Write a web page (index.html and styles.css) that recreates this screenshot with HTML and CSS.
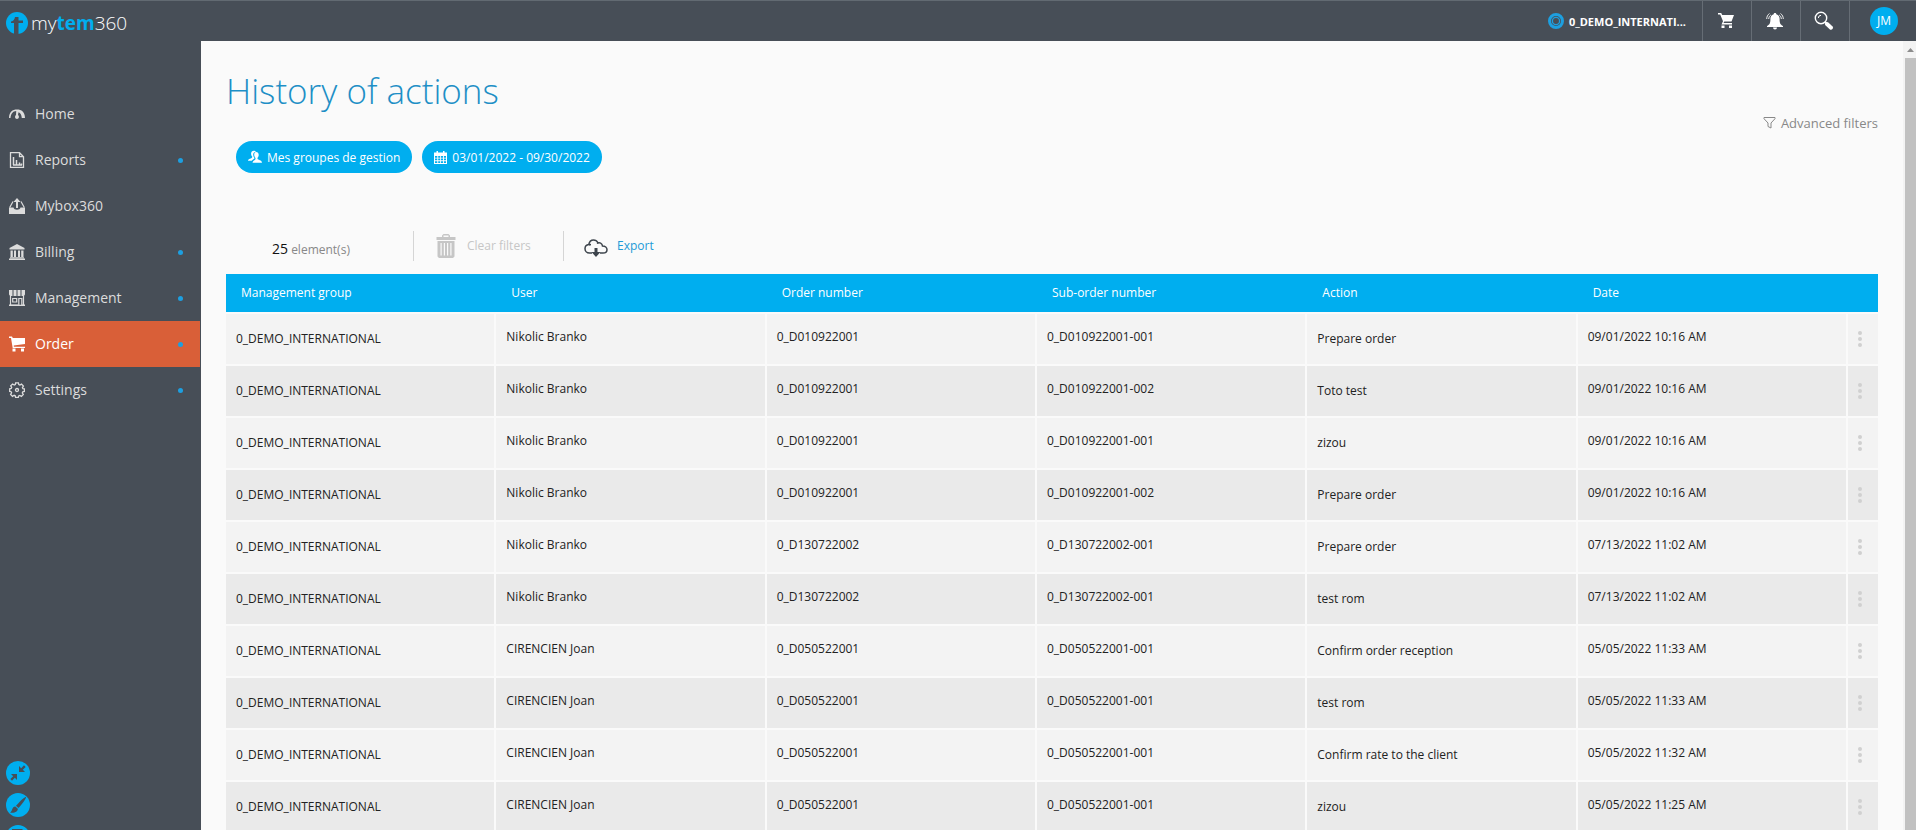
FILE: index.html
```html
<!DOCTYPE html>
<html lang="en">
<head>
    <meta charset="UTF-8">
    <meta name="viewport" content="width=device-width, initial-scale=1.0">
    <title>mytem360 - History of actions</title>
    <link rel="stylesheet" href="styles.css">
</head>
<body>
    <svg class="sprite" aria-hidden="true">
        <symbol id="dots" viewBox="0 0 6 18">
            <circle cx="3" cy="3" r="2"/><circle cx="3" cy="9" r="2"/><circle cx="3" cy="15" r="2"/>
        </symbol>
    </svg>

    <header class="topbar">
        <a href="#" class="logo">
            <svg width="22" height="22" viewBox="0 0 22 22">
                <circle cx="11" cy="11" r="11" fill="#00aeef"/>
                <path d="M8 22V11H5V9.500C7.500 9 8.500 7.500 9 5h3.500v3.500H17V11h-4.500v11z" fill="#474e57"/>
            </svg>
            <span>my<b>tem</b>360</span>
        </a>
        <div class="top-actions">
            <button class="group">
                <svg width="16" height="16" viewBox="0 0 16 16" fill="none">
                    <circle cx="8" cy="8" r="6.500" stroke="#1d9fe0" stroke-width="3"/>
                    <circle cx="8" cy="8" r="3.600" stroke="#1d9fe0" stroke-width="1.300"/>
                </svg>
                <span>0_DEMO_INTERNATI...</span>
            </button>
            <button class="top-btn" aria-label="Cart">
                <svg width="16" height="16" viewBox="0 0 16 16" fill="#fff">
                    <path d="M0 0h3.200l1 2H16l-2.500 6.500H6.300L5.500 10H14v1.500H3.500L5 8.300 2.200 1.500H0z"/>
                    <path d="M3.500 12.500h3V15h-3zM11 12.500h3V15h-3z"/>
                </svg>
            </button>
            <button class="top-btn" aria-label="Notifications">
                <svg width="18" height="18" viewBox="0 0 18 18" fill="#fff">
                    <path d="M9 1c.8 0 1.300.5 1.300 1.200C12.700 2.800 13.600 4.700 13.600 7c0 4 .5 5.500 3.400 7v1H1v-1c2.900-1.500 3.400-3 3.400-7 0-2.300.9-4.200 3.300-4.800C7.700 1.500 8.200 1 9 1zM7 15.500h4a2 2 0 0 1-4 0z"/>
                    <path d="M3.500 1.500C1.500 3 .8 4.700.7 7M14.500 1.500c2 1.500 2.700 3.200 2.800 5.500M4.800 3C3.500 4 2.800 5.200 2.700 7M13.200 3c1.300 1 2 2.200 2.100 4" fill="none" stroke="#fff" stroke-width=".9"/>
                </svg>
            </button>
            <button class="top-btn" aria-label="Search">
                <svg width="20" height="20" viewBox="0 0 20 20" fill="none" stroke="#fff">
                    <circle cx="7" cy="7" r="5.700" stroke-width="1.400"/>
                    <path d="M4.300 7A2.800 2.800 0 0 1 7 4.300" stroke-width="1"/>
                    <path d="M10.800 10.800l2 2" stroke-width="2"/>
                    <path d="M13 13l4 3.700" stroke-width="4" stroke-linecap="round"/>
                </svg>
            </button>
            <button class="top-btn top-user" aria-label="Account"><span class="avatar">JM</span></button>
        </div>
    </header>

    <div class="layout">
        <aside class="sidebar">
            <nav class="menu">
                <a href="#">
                    <svg width="16" height="16" viewBox="0 0 16 16" fill="currentColor">
                        <path d="M0 12C0 6 3.500 3.500 8 3.500S16 6 16 12h-3.200c-.2-3-1.300-5-3.300-5.700L9 9c1.500 1 1.200 4-1 4s-2.500-3-1-4l.2-4C4 5.200 2 7.500 1.500 12z"/>
                    </svg>
                    <span>Home</span>
                </a>
                <a href="#" class="has-sub">
                    <svg width="16" height="16" viewBox="0 0 16 16" fill="none" stroke="currentColor">
                        <path d="M1.500.7h9l4 4v10.600h-13zM10.500.7v4h4" stroke-width="1.300"/>
                        <path d="M4.500 13V5M7.500 13V8M10.500 13v-2.500M12.500 13v-1.500M4 13h9" stroke-width="1.500"/>
                    </svg>
                    <span>Reports</span>
                </a>
                <a href="#">
                    <svg width="16" height="16" viewBox="0 0 16 16" fill="currentColor">
                        <path d="M0 9.500h4.500c.5 3 6.500 3 7 0H16V16H0z"/>
                        <path d="M8 0l3.500 4H9v6H7V4H4.500z"/>
                        <path d="M.7 9.500l3.300-6M15.300 9.500l-3.300-6" fill="none" stroke="currentColor" stroke-width="1.200"/>
                    </svg>
                    <span>Mybox360</span>
                </a>
                <a href="#" class="has-sub">
                    <svg width="16" height="16" viewBox="0 0 16 16" fill="currentColor">
                        <path d="M8 0l7.500 4v1.500H.5V4zM1.500 6.500h2.300V13H1.500zM5 6.500h2V13H5zM9 6.500h2V13H9zM12.200 6.500h2.300V13h-2.300zM1 13.200h14v1H1zM0 14.500h16V16H0z"/>
                    </svg>
                    <span>Billing</span>
                </a>
                <a href="#" class="has-sub">
                    <svg width="16" height="16" viewBox="0 0 16 16" fill="currentColor">
                        <path d="M0 0h3.500v6H1.200L0 4.500zM4.500 0h3v6h-3zM8.500 0h3v6h-3zM12.500 0H16v4.500L14.800 6h-2.300z"/>
                        <path d="M1.500 5v10.300h13V5M3.700 8.500h4v3.500h-4zM9.800 15.500V8.500h3v7" fill="none" stroke="currentColor" stroke-width="1.200"/>
                        <path d="M0 14.500h9V16H0zM13 14.500h3V16h-3z"/>
                    </svg>
                    <span>Management</span>
                </a>
                <a href="#" class="has-sub active">
                    <svg width="16" height="16" viewBox="0 0 16 16" fill="currentColor">
                        <path d="M0 .5h3L3.800 2H16v6L4.700 9.500l.2 1.300H16V12H3.700L2 2H0z"/>
                        <path d="M3.500 12.500h3V15.500h-3zM12 12.500h3V15.500h-3z"/>
                    </svg>
                    <span>Order</span>
                </a>
                <a href="#" class="has-sub">
                    <svg width="16" height="16" viewBox="0 0 16 16" fill="none" stroke="currentColor" stroke-width="1.300">
                        <path d="M6.600.8h2.800l.4 1.800 1.100.5 1.600-1 1.900 1.900-1 1.600.5 1.100 1.500.2v2.500l-1.600.4-.5 1.200 1 1.500-1.900 1.900-1.600-1-1.100.5-.4 1.500H6.600l-.4-1.600-1.100-.5-1.600 1-1.900-1.900 1-1.600-.5-1.100-1.400-.3V6.800l1.500-.3.500-1.100-1-1.500 1.900-1.900 1.600 1 1.100-.5z"/>
                        <circle cx="8" cy="8" r="1.500"/>
                    </svg>
                    <span>Settings</span>
                </a>
            </nav>
            <div class="tools">
                <button aria-label="Collapse menu">
                    <svg width="16" height="16" viewBox="0 0 16 16" fill="#474e57">
                        <path d="M9 1v6h6l-2.200-2.200L15.700 2 14 .3l-2.800 2.900zM7 15V9H1l2.200 2.200L.3 14 2 15.700l2.800-2.900z"/>
                    </svg>
                </button>
                <button aria-label="Theme">
                    <svg width="16" height="16" viewBox="0 0 16 16" fill="#474e57">
                        <path d="M16 0c.6 1.500-5 8.500-7.500 11L6 8.800C8.500 6 14.500-.5 16 0zM5.300 9.500l2.500 2.300c.2 2.600-3.300 4.700-7.800 3.700 2.600-1.200 1.700-5.800 5.300-6z"/>
                    </svg>
                </button>
                <button aria-label="Help">
                    <svg width="16" height="16" viewBox="0 0 16 16" fill="#474e57"><path d="M2 0h10l3 3v13H2z"/></svg>
                </button>
            </div>
        </aside>

        <main class="content">
            <h1>History of actions</h1>
            <div class="filters">
                <button class="pill">
                    <svg width="14" height="14" viewBox="0 0 14 14" fill="#fff">
                        <path d="M8 2c1.800 0 2.700 1.200 2.700 2.800 0 1.200-.5 2.400-1.200 3v1C9.900 10 13.800 10 14 12.800H4.500c.2-2.300 2.700-2.500 3-3.900v-1C6.800 7.200 6.200 6 6.200 4.800 6.200 3.200 6.800 2 8 2z"/>
                        <path d="M5.800.7c1 0 1.800.4 2.200 1C6 1.800 5 3.200 5.200 5c.1 1.300.6 2.300 1.300 3-.1 1.200-2 1.300-2.800 2.800H0C.2 8.500 3.600 8.900 4.200 7.300V6.500C3.500 5.800 3.100 4.700 3.100 3.500 3.100 1.800 4.100.7 5.800.7z"/>
                    </svg>
                    <span>Mes groupes de gestion</span>
                </button>
                <button class="pill">
                    <svg width="13" height="13" viewBox="0 0 13 13" fill="#fff">
                        <path fill-rule="evenodd" d="M0 1.500h13V13H0zM1 5v1.700h2.300V5zM4.200 5v1.700h2V5zM7 5v1.700h2V5zM9.900 5v1.700H12V5zM1 7.600v1.700h2.300V7.600zM4.200 7.600v1.700h2V7.600zM7 7.600v1.700h2V7.600zM9.900 7.600v1.700H12V7.600zM1 10.200V12h2.300v-1.800zM4.200 10.200V12h2v-1.800zM7 10.200V12h2v-1.800zM9.900 10.200V12H12v-1.800z"/>
                        <path d="M2.500 0H4v3H2.500zM9 0h1.500v3H9z"/>
                    </svg>
                    <span>03/01/2022 - 09/30/2022</span>
                </button>
                <button class="advanced">
                    <svg width="13" height="12" viewBox="0 0 13 12" fill="none" stroke="#888"><path d="M1 .5h11v1.200L8 6v5L5 9.500V6L1 1.700z"/></svg>
                    <span>Advanced filters</span>
                </button>
            </div>

            <div class="toolbar">
                <p class="count"><span>25</span> element(s)</p>
                <button class="tool clear" disabled>
                    <svg width="20" height="24" viewBox="0 0 20 24" fill="#c6c6c6">
                        <path d="M6 3V1.500L7.500 0h5L14 1.500V3h5.500v3H.5V3zM7.500 3h5V1.500h-5z" fill-rule="evenodd"/>
                        <path fill-rule="evenodd" d="M1.500 7h17v15.500L17 24H3l-1.500-1.500zM4.500 9v12.500h1.200V9zM7.800 9v12.500H9V9zM11 9v12.500h1.200V9zM14.300 9v12.500h1.200V9z"/>
                    </svg>
                    <span>Clear filters</span>
                </button>
                <button class="tool export">
                    <svg width="24" height="18" viewBox="0 0 24 18" fill="none" stroke="#3d444c" stroke-width="1.500">
                        <path d="M8 14H5.500C2.800 14 1 12 1 9.700 1 7.500 2.600 5.800 4.800 5.500 5.300 2.700 7.500 1 9.500 1c2 0 3.500 1 4.300 2.500M13 4.500c2.500-1.700 5.300-.2 5.500 2.500 2.700 0 4.500 1.700 4.500 3.700S21.200 14 19 14h-3M7 5.500c-.8 0-1.500.2-2 .7"/>
                        <path d="M10.500 9h3v4h3L12 18l-4.500-5h3z" fill="#3d444c" stroke="none"/>
                    </svg>
                    <span>Export</span>
                </button>
            </div>

            <table class="history">
                <thead>
                    <tr>
                        <th>Management group</th>
                        <th>User</th>
                        <th>Order number</th>
                        <th>Sub-order number</th>
                        <th>Action</th>
                        <th>Date</th>
                        <th class="more"></th>
                    </tr>
                </thead>
                <tbody>
                    <tr>
                        <td class="low">0_DEMO_INTERNATIONAL</td>
                        <td>Nikolic Branko</td>
                        <td>0_D010922001</td>
                        <td>0_D010922001-001</td>
                        <td class="low">Prepare order</td>
                        <td>09/01/2022 10:16 AM</td>
                        <td class="more"><button aria-label="More"><svg><use href="#dots"/></svg></button></td>
                    </tr>
                    <tr>
                        <td class="low">0_DEMO_INTERNATIONAL</td>
                        <td>Nikolic Branko</td>
                        <td>0_D010922001</td>
                        <td>0_D010922001-002</td>
                        <td class="low">Toto test</td>
                        <td>09/01/2022 10:16 AM</td>
                        <td class="more"><button aria-label="More"><svg><use href="#dots"/></svg></button></td>
                    </tr>
                    <tr>
                        <td class="low">0_DEMO_INTERNATIONAL</td>
                        <td>Nikolic Branko</td>
                        <td>0_D010922001</td>
                        <td>0_D010922001-001</td>
                        <td class="low">zizou</td>
                        <td>09/01/2022 10:16 AM</td>
                        <td class="more"><button aria-label="More"><svg><use href="#dots"/></svg></button></td>
                    </tr>
                    <tr>
                        <td class="low">0_DEMO_INTERNATIONAL</td>
                        <td>Nikolic Branko</td>
                        <td>0_D010922001</td>
                        <td>0_D010922001-002</td>
                        <td class="low">Prepare order</td>
                        <td>09/01/2022 10:16 AM</td>
                        <td class="more"><button aria-label="More"><svg><use href="#dots"/></svg></button></td>
                    </tr>
                    <tr>
                        <td class="low">0_DEMO_INTERNATIONAL</td>
                        <td>Nikolic Branko</td>
                        <td>0_D130722002</td>
                        <td>0_D130722002-001</td>
                        <td class="low">Prepare order</td>
                        <td>07/13/2022 11:02 AM</td>
                        <td class="more"><button aria-label="More"><svg><use href="#dots"/></svg></button></td>
                    </tr>
                    <tr>
                        <td class="low">0_DEMO_INTERNATIONAL</td>
                        <td>Nikolic Branko</td>
                        <td>0_D130722002</td>
                        <td>0_D130722002-001</td>
                        <td class="low">test rom</td>
                        <td>07/13/2022 11:02 AM</td>
                        <td class="more"><button aria-label="More"><svg><use href="#dots"/></svg></button></td>
                    </tr>
                    <tr>
                        <td class="low">0_DEMO_INTERNATIONAL</td>
                        <td>CIRENCIEN Joan</td>
                        <td>0_D050522001</td>
                        <td>0_D050522001-001</td>
                        <td class="low">Confirm order reception</td>
                        <td>05/05/2022 11:33 AM</td>
                        <td class="more"><button aria-label="More"><svg><use href="#dots"/></svg></button></td>
                    </tr>
                    <tr>
                        <td class="low">0_DEMO_INTERNATIONAL</td>
                        <td>CIRENCIEN Joan</td>
                        <td>0_D050522001</td>
                        <td>0_D050522001-001</td>
                        <td class="low">test rom</td>
                        <td>05/05/2022 11:33 AM</td>
                        <td class="more"><button aria-label="More"><svg><use href="#dots"/></svg></button></td>
                    </tr>
                    <tr>
                        <td class="low">0_DEMO_INTERNATIONAL</td>
                        <td>CIRENCIEN Joan</td>
                        <td>0_D050522001</td>
                        <td>0_D050522001-001</td>
                        <td class="low">Confirm rate to the client</td>
                        <td>05/05/2022 11:32 AM</td>
                        <td class="more"><button aria-label="More"><svg><use href="#dots"/></svg></button></td>
                    </tr>
                    <tr>
                        <td class="low">0_DEMO_INTERNATIONAL</td>
                        <td>CIRENCIEN Joan</td>
                        <td>0_D050522001</td>
                        <td>0_D050522001-001</td>
                        <td class="low">zizou</td>
                        <td>05/05/2022 11:25 AM</td>
                        <td class="more"><button aria-label="More"><svg><use href="#dots"/></svg></button></td>
                    </tr>
                </tbody>
            </table>
        </main>

        <div class="scrollbar">
            <svg width="13" height="17" viewBox="0 0 13 17"><path d="M4 11h7L7.500 7z" fill="#8c8c8c"/></svg>
            <div class="thumb"></div>
        </div>
    </div>
</body>
</html>
```
FILE: styles.css
```css
* {
    box-sizing: border-box;
}

body {
    margin: 0;
    height: 100vh;
    display: flex;
    flex-direction: column;
    overflow: hidden;
    font-family: 'Open Sans', 'Noto Sans', sans-serif;
    font-size: 12px;
    color: #222;
    background-color: #474e57;
}

button {
    border: none;
    padding: 0;
    background: none;
    font: inherit;
    color: inherit;
    cursor: pointer;
}

a {
    text-decoration: none;
    color: inherit;
}

svg {
    display: block;
    flex-shrink: 0;
}

.sprite {
    width: 0;
    height: 0;
    position: absolute;
}

/* top bar */
.topbar {
    display: flex;
    justify-content: space-between;
    flex-shrink: 0;
    height: 41px;
    border-top: 1px solid #626a72;
}

.logo {
    display: flex;
    align-items: center;
    gap: 3px;
    padding: 4px 0 0 6px;
    font-size: 19px;
    font-weight: 300;
    color: #fff;
}

.logo b {
    font-weight: 700;
    color: #00aeef;
}

.top-actions {
    display: flex;
}

.group {
    display: flex;
    align-items: center;
    gap: 5px;
    padding-right: 16px;
    font-size: 11px;
    font-weight: 700;
    color: #fff;
}

.top-btn {
    display: flex;
    align-items: center;
    justify-content: center;
    width: 49px;
    padding-right: 2px;
    border-left: 1px solid #666d75;
}

.top-user {
    width: 67px;
    padding: 0 0 0 2px;
}

.avatar {
    width: 28px;
    height: 28px;
    border-radius: 50%;
    background-color: #00aeef;
    color: #fff;
    line-height: 28px;
}

/* sidebar */
.layout {
    display: flex;
    flex: 1;
    min-height: 0;
}

.sidebar {
    display: flex;
    flex-direction: column;
    justify-content: space-between;
    flex-shrink: 0;
    width: 201px;
    padding-top: 50px;
}

.menu {
    margin-right: 1px;
}

.menu a {
    display: flex;
    align-items: center;
    gap: 10px;
    height: 46px;
    padding: 0 17px 0 9px;
    font-size: 14px;
    color: #dcdcdc;
}

.menu span {
    padding-bottom: 2px;
}

.menu .active {
    background-color: #d95f38;
    color: #fff;
}

.has-sub::after {
    content: "";
    width: 5px;
    height: 5px;
    margin-left: auto;
    border-radius: 50%;
    background-color: #1d9fe0;
}

.tools {
    display: flex;
    flex-direction: column;
    gap: 8px;
    padding-left: 6px;
    margin-bottom: -19px;
}

.tools button {
    display: flex;
    align-items: center;
    justify-content: center;
    width: 24px;
    height: 24px;
    border-radius: 50%;
    background-color: #00aeef;
}

/* content */
.content {
    flex: 1;
    overflow: hidden;
    padding: 25px 25px 0;
    background-color: #fafafa;
}

h1 {
    margin: 0;
    font-size: 35px;
    font-weight: 300;
    line-height: 50px;
    color: #1e8fc6;
}

.filters {
    display: flex;
    gap: 10px;
    padding: 25px 0 0 10px;
}

.pill {
    display: flex;
    align-items: center;
    gap: 5px;
    height: 32px;
    padding: 0 12px;
    border-radius: 16px;
    background-color: #00aeef;
    color: #fff;
}

.advanced {
    display: flex;
    align-items: center;
    gap: 5px;
    height: 18px;
    margin: -27px 0 0 auto;
    font-size: 13px;
    color: #888;
}

.toolbar {
    display: flex;
    align-items: center;
    height: 30px;
    margin: 58px 0 13px;
}

.count {
    width: 187px;
    margin: 0;
    padding: 4px 0 0 46px;
    color: #888;
}

.count span {
    font-size: 14px;
    color: #111;
}

.tool {
    display: flex;
    align-items: center;
    height: 30px;
    border-left: 1px solid #d5d5d5;
}

.tool span {
    padding-bottom: 2px;
}

.clear {
    gap: 11px;
    width: 150px;
    padding-left: 22px;
    color: #c6c6c6;
}

.export {
    gap: 9px;
    padding-left: 20px;
    color: #1e9bd7;
}

.export svg {
    margin-top: 4px;
}

.history {
    width: 100%;
    table-layout: fixed;
    border-spacing: 0;
}

.history th {
    height: 38px;
    padding: 0 15px 2px;
    background-color: #00aeef;
    color: #fff;
    font-weight: 400;
    text-align: left;
}

.history td {
    height: 52px;
    padding: 0 10px 6px;
    border-top: 2px solid #fafafa;
    border-right: 2px solid #fafafa;
    background-color: #f3f3f3;
}

.history tr:nth-child(even) td {
    background-color: #eaeaea;
}

.history td.low {
    padding-bottom: 2px;
}

.history .more {
    width: 30px;
    padding: 0;
    border-right: none;
}

.more button {
    display: block;
    margin: 0 9px;
}

.more svg {
    width: 6px;
    height: 18px;
    fill: #d0d0d0;
}

.scrollbar {
    display: flex;
    flex-direction: column;
    width: 13px;
    background-color: #f3f3f3;
}

.thumb {
    flex: 1;
    margin-left: 2px;
    background-color: #c1c1c1;
}
```
